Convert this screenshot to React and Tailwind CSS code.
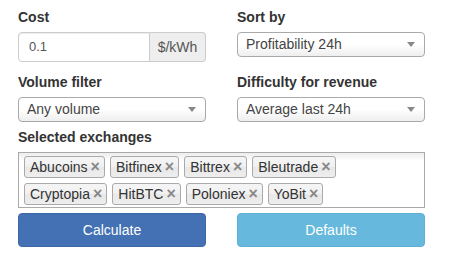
import React from 'react';

const exchanges = ['Abucoins', 'Bitfinex', 'Bittrex', 'Bleutrade', 'Cryptopia', 'HitBTC', 'Poloniex', 'YoBit'];

function Label({ children }) {
  return <div className="h-5 mb-[5px] text-[14px] leading-5 font-bold text-[#333]">{children}</div>;
}

function Select({ value }) {
  return (
    <div className="relative h-[25px] rounded-[4px] border border-[#aaa] bg-[linear-gradient(to_top,#eee_0%,#fff_50%)] pl-[8px] text-[14px] leading-[23px] text-[#444]">
      {value}
      <span className="absolute right-[9px] top-[9px] h-0 w-0 border-x-[4px] border-t-[5px] border-x-transparent border-t-[#888]" />
    </div>
  );
}

export default function App() {
  return (
    <div className="w-[472px] h-[257px] bg-white pl-[18px] pt-[7px] font-['Liberation_Sans',Arial,sans-serif]">
      <div className="w-[407px]">
        <div className="grid grid-cols-2 gap-x-[31px]">
          <div className="mb-[10px]">
            <Label>Cost</Label>
            <div className="flex h-[30px]">
              <div className="flex-1 rounded-l-[4px] border border-[#ccc] pl-[10px] text-[13px] leading-[28px] text-[#555] shadow-[inset_0_1px_1px_rgba(0,0,0,0.075)]">
                0.1
              </div>
              <div className="w-[56px] rounded-r-[4px] border border-l-0 border-[#ccc] bg-[#eee] text-center text-[14px] leading-[28px] text-[#555]">
                $/kWh
              </div>
            </div>
          </div>
          <div>
            <Label>Sort by</Label>
            <Select value="Profitability 24h" />
          </div>
          <div className="mb-[5px]">
            <Label>Volume filter</Label>
            <Select value="Any volume" />
          </div>
          <div>
            <Label>Difficulty for revenue</Label>
            <Select value="Average last 24h" />
          </div>
        </div>
        <Label>Selected exchanges</Label>
        <div className="h-[56px] border border-[#aaa] bg-[linear-gradient(to_bottom,#eee_1%,#fff_15%)] pl-[5px] pr-[8px] pt-[3px] flex flex-wrap content-start gap-x-[5px] gap-y-[5px]">
          {exchanges.map((ex) => (
            <span
              key={ex}
              className="flex h-[22px] items-center rounded-[3px] border border-[#aaa] bg-[linear-gradient(to_bottom,#f4f4f4_20%,#f0f0f0_50%,#e8e8e8_52%,#eee_100%)] pl-[5px] pr-[4px] text-[14px] text-[#333]"
            >
              {ex}
              <span className="ml-[3px] text-[16px] font-bold leading-none text-[#888]">×</span>
            </span>
          ))}
        </div>
        <div className="mt-[5px] grid grid-cols-2 gap-x-[31px]">
          <button className="h-[34px] rounded-[4px] border border-[#3d68a6] bg-[#4371b3] text-[14px] text-white">
            Calculate
          </button>
          <button className="h-[34px] rounded-[4px] border border-[#5cb0d4] bg-[#66b9dd] text-[14px] text-white">
            Defaults
          </button>
        </div>
      </div>
    </div>
  );
}
